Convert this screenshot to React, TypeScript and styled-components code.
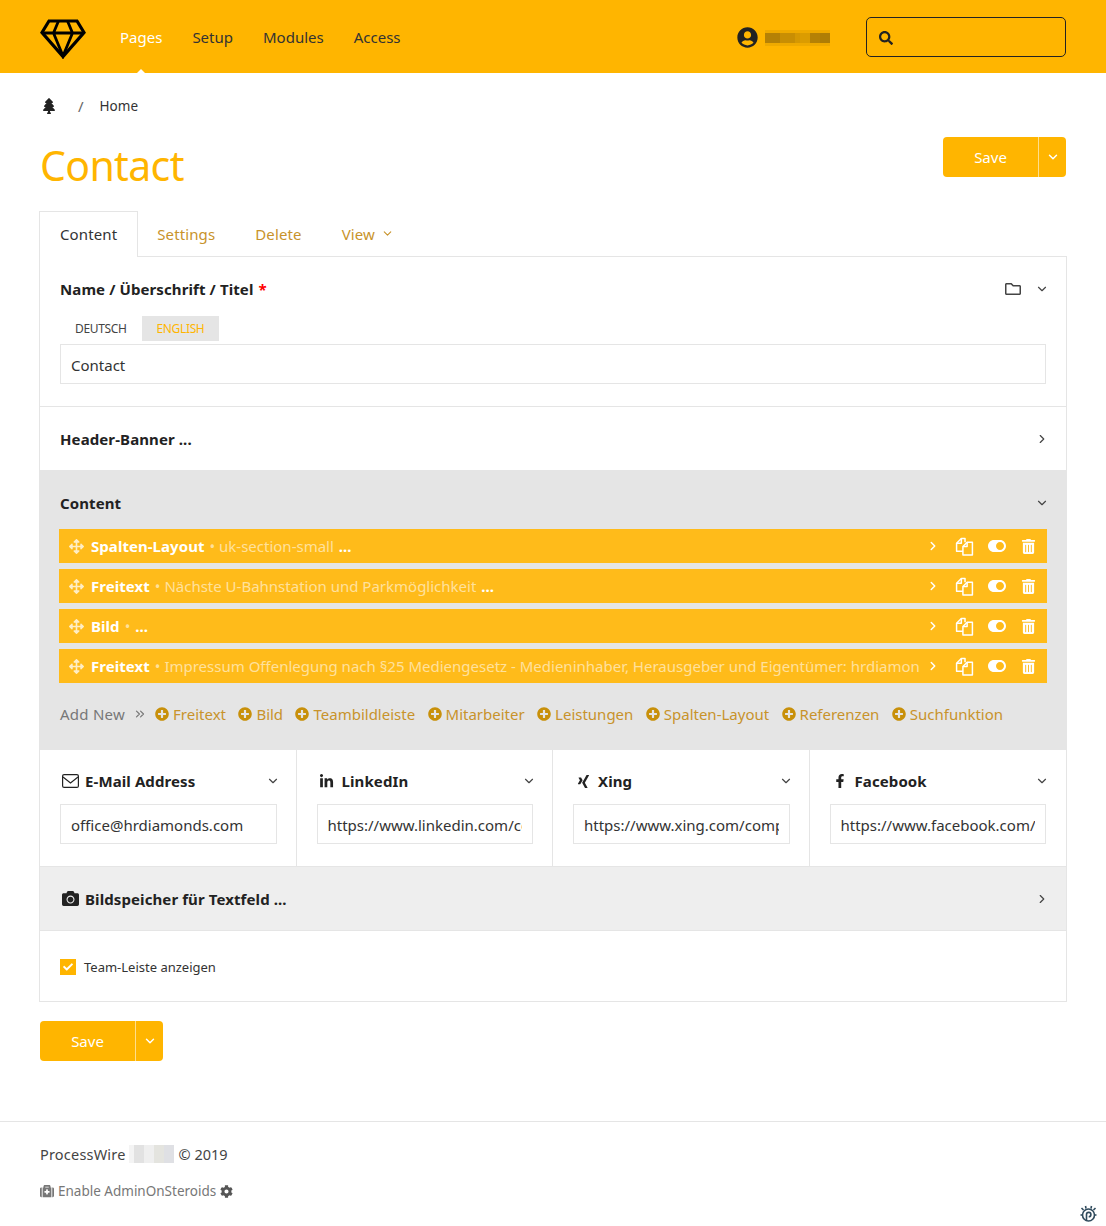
import React from "react";
import styled, { createGlobalStyle } from "styled-components";
import {
  FaTree, FaUserCircle, FaSearch, FaArrowsAlt, FaToggleOn, FaTrashAlt, FaPlusCircle, FaLinkedinIn, FaXing,
  FaFacebookF, FaCamera, FaRegFolder, FaMedkit, FaCog, FaCheck,
} from "react-icons/fa";
import { ChevronDown, ChevronRight, ChevronsRight } from "lucide-react";

const Y = "#FFB500";

const Global = createGlobalStyle`
  html, body { margin: 0; padding: 0; background: #fff; }
  body { font-family: "Noto Sans", "Open Sans", sans-serif; font-size: 15px; color: #333; line-height: 24px; }
  * { box-sizing: border-box; }
`;

const Page = styled.div`position: relative; width: 1106px; height: 1226px; overflow: hidden;`;
const Header = styled.header`height: 73px; background: ${Y}; display: flex; align-items: center; padding: 0 40px;`;
const Logo = styled.svg`width: 46px; height: 40px; flex: none; margin-top: 4px;`;
const Nav = styled.nav`display: flex; gap: 30px; margin-left: 34px; flex: 1;`;
const NavItem = styled.a<{ $active?: boolean }>`
  position: relative; font-size: 15px; line-height: 73px; padding-top: 2px; color: ${(p) => (p.$active ? "#fff" : "#333")};
  ${(p) => p.$active && `&::after { content: ""; position: absolute; left: 50%; bottom: 0; margin-left: -5px; border: 5px solid transparent; border-top: 0; border-bottom-color: #fff; }`}
`;
const User = styled.div`display: flex; align-items: center; gap: 7px; margin-right: 36px; margin-top: 2px; color: #222;`;
const Blur = styled.div`display: flex; width: 65px; height: 16px; background: rgba(120,90,0,.12);`;
const BlurCell = styled.span<{ $w: number; $a: number }>`height: 10px; margin-top: 3px; width: ${(p) => p.$w}px; background: rgba(110,80,10,${(p) => p.$a});`;
const Search = styled.div`width: 200px; height: 40px; border: 1px solid #222; border-radius: 5px; display: flex; align-items: center; padding: 2px 0 0 12px; color: #222;`;

const Main = styled.main`padding: 0 40px;`;
const Crumbs = styled.div`display: flex; align-items: center; height: 18px; margin-top: 24px; font-size: 13.5px; color: #333;`;
const CrumbIcon = styled.span`display: flex; margin-left: 1px; color: #222;`;
const Slash = styled.span`margin: 0 16px 0 21px; font-size: 15px; color: #666;`;
const TitleRow = styled.div`display: flex; justify-content: space-between; align-items: flex-start; margin-top: 22px; margin-bottom: 16px;`;
const H1 = styled.h1`margin: 0; font-size: 41px; line-height: 56px; font-weight: 400; color: ${Y}; letter-spacing: -.65px; height: 58px;`;
const SaveGroup = styled.div`display: flex; width: 123px; height: 40px; border-radius: 4px; overflow: hidden; background: ${Y}; color: #fff;`;
const SaveMain = styled.button`width: 96px; border: 0; background: none; color: inherit; font: inherit; padding: 0; border-right: 1px solid rgba(255,255,255,.55);`;
const SaveDrop = styled.span`flex: 1; display: flex; align-items: center; justify-content: center;`;

const Tabs = styled.div`display: flex; margin: 0 -1px; height: 46px; position: relative; z-index: 1; letter-spacing: .12px;`;
const Tab = styled.a<{ $active?: boolean }>`
  display: flex; align-items: center; gap: 6px; height: ${(p) => (p.$active ? 46 : 45)}px; padding: 0 20px;
  color: ${(p) => (p.$active ? "#333" : "#c8932b")};
  ${(p) => p.$active ? "background:#fff; border: 1px solid #e5e5e5; border-bottom: 0; margin-right: -1px; padding-bottom: 2px;" : ""}
`;
const Panel = styled.div`margin: -1px -1px 0; border: 1px solid #e5e5e5;`;
const Field = styled.section`padding: 20px 20px 22px; background: #fff; border-bottom: 1px solid #e5e5e5;`;
const Bar = styled.section<{ $bg?: string }>`
  height: 64px; display: flex; align-items: center; justify-content: space-between; padding: 0 20px;
  background: ${(p) => p.$bg || "#fff"}; border-bottom: 1px solid #e5e5e5;
`;
const FieldHead = styled.div`display: flex; align-items: center; justify-content: space-between; height: 24px;`;
const Label = styled.div`font-weight: 700; font-size: 15px; letter-spacing: .1px; color: #222; display: flex; align-items: center; gap: 5px;`;
const Req = styled.span`color: #f00; margin-left: 1px;`;
const HeadIcons = styled.div`display: flex; align-items: center; gap: 14px; color: #444; margin-right: -3px;`;
const Toggle = styled.span`display: flex; color: #444; margin-right: -3px;`;
const LangRow = styled.div`display: flex; margin-top: 15px; height: 25px;`;
const Lang = styled.span<{ $active?: boolean }>`
  padding: 0 15px; font-size: 12px; line-height: 25px; letter-spacing: -.35px;
  color: ${(p) => (p.$active ? Y : "#444")}; background: ${(p) => (p.$active ? "#e5e5e5" : "transparent")};
`;
const Input = styled.input`
  display: block; width: 100%; height: 40px; border: 1px solid #e5e5e5; padding: 2px 10px 0; margin-top: 3px;
  font: inherit; color: #333; outline: 0; background: #fff;
`;

const Content = styled.section`background: #e5e5e5; padding: 20px 19px 23px; border-bottom: 1px solid #e5e5e5;`;
const ContentHead = styled(FieldHead)`padding: 0 1px;`;
const Rows = styled.div`display: flex; flex-direction: column; gap: 6px; margin-top: 14px;`;
const Row = styled.div`height: 34px; background: #FFBB1A; color: #fff; display: flex; align-items: center; padding: 0 10px;`;
const RowText = styled.div`flex: 1; min-width: 0; display: flex; align-items: center; gap: 5px; white-space: nowrap; overflow: hidden; margin-left: 7px; margin-right: 6px;`;
const RowName = styled.b`font-weight: 700; letter-spacing: .05px;`;
const RowSub = styled.span`color: rgba(255,255,255,.58);`;
const RowTools = styled.div`display: flex; align-items: center; flex: none;`;
const ToolSlot = styled.span<{ $w: number; $ml?: number }>`
  width: ${(p) => p.$w}px; margin-left: ${(p) => p.$ml || 0}px; display: flex; align-items: center; justify-content: center;
`;
const AddBar = styled.div`display: flex; align-items: center; height: 24px; margin: 19px 0 0 1px;`;
const AddLabel = styled.span`color: #777; letter-spacing: .25px;`;
const AddArrow = styled.span`display: flex; margin: 0 8px 0 8px; color: #777;`;
const AddLink = styled.a`display: flex; align-items: center; gap: 4px; margin-right: 12.4px; color: #c8932b;`;
const AddIcon = styled.span`display: flex; color: #c8900a;`;

const Columns = styled.div`display: grid; grid-template-columns: repeat(4, 1fr); border-bottom: 1px solid #e5e5e5;`;
const Cell = styled.div`padding: 19px 19px 22px 20px; border-right: 1px solid #e5e5e5; &:last-child { border-right: 0; padding-right: 20px; }`;
const CellInput = styled(Input)`margin-top: 11px;`;
const LabelIcon = styled.span`display: flex; width: 20px; justify-content: center; color: #222;`;
const CheckRow = styled.div`height: 70px; display: flex; align-items: center; gap: 8px; padding: 2px 20px 0; font-size: 13px;`;
const Box = styled.span`width: 16px; height: 16px; background: ${Y}; color: #fff; display: flex; align-items: center; justify-content: center;`;
const BottomSave = styled.div`margin-top: 19px;`;

const Footer = styled.footer`margin-top: 60px; border-top: 1px solid #e5e5e5; padding: 20px 40px 0; color: #444;`;
const FootLine = styled.div`display: flex; align-items: center; height: 24px; font-size: 14.5px; gap: 3px;`;
const FootName = styled.span`letter-spacing: .2px;`;
const FootBlur = styled.div`display: flex; width: 45px; height: 18px; background: #eee; margin-right: 2px;`;
const FootCell = styled.span<{ $w: number; $c: string }>`width: ${(p) => p.$w}px; background: ${(p) => p.$c};`;
const Enable = styled.div`display: flex; align-items: center; gap: 4px; margin-top: 13px; height: 24px; font-size: 13.5px; color: #777;`;
const Bug = styled.svg`position: absolute; right: 9px; bottom: 3px; width: 17px; height: 18px;`;

const FilesIcon = () => (
  <svg width="19" height="19" viewBox="0 0 18 18" fill="none" stroke="#fff" strokeWidth="1.4" strokeLinejoin="round">
    <path d="M9.5 5V1.5H6L1.5 6v7.5h6" />
    <path d="M6 1.5V6H1.5" />
    <path d="M7.5 9l4-4h5v12h-9z" />
    <path d="M11.5 5v4h-4" />
  </svg>
);

const EnvelopeIcon = () => (
  <svg width="17" height="14" viewBox="0 0 17 14" fill="none" stroke="#222" strokeWidth="1.2">
    <rect x=".6" y=".6" width="15.8" height="12.8" rx="1.5" />
    <path d="M1 3l7.5 6L16 3" />
  </svg>
);

const SaveButton = () => (
  <SaveGroup>
    <SaveMain>Save</SaveMain>
    <SaveDrop><ChevronDown size={14} strokeWidth={2.5} /></SaveDrop>
  </SaveGroup>
);

const rows: [string, string, boolean][] = [
  ["Spalten-Layout", "uk-section-small", true],
  ["Freitext", "Nächste U-Bahnstation und Parkmöglichkeit", true],
  ["Bild", "", true],
  ["Freitext", "Impressum Offenlegung nach §25 Mediengesetz - Medieninhaber, Herausgeber und Eigentümer: hrdiamonds GmbH", false],
];
const adds = ["Freitext", "Bild", "Teambildleiste", "Mitarbeiter", "Leistungen", "Spalten-Layout", "Referenzen", "Suchfunktion"];
const cols: [React.ReactNode, string, string][] = [
  [<EnvelopeIcon />, "E-Mail Address", "office@hrdiamonds.com"],
  [<FaLinkedinIn size={15} />, "LinkedIn", "https://www.linkedin.com/company/hrdiamonds"],
  [<FaXing size={15} />, "Xing", "https://www.xing.com/companies/hrdiamonds"],
  [<FaFacebookF size={14} />, "Facebook", "https://www.facebook.com/hrdiamonds"],
];
const blur: [number, number][] = [[15, .45], [15, .3], [5, .2], [10, .15], [10, .45], [10, .5]];
const foot: [number, string][] = [[5, "#f4f4f4"], [10, "#e2e2e2"], [10, "#efefef"], [10, "#e4e4df"], [10, "#dfe0e4"]];

export default function App() {
  return (
    <Page>
      <Global />
      <Header>
        <Logo viewBox="0 0 46 40" fill="none" stroke="#000" strokeWidth="3.2" strokeLinejoin="miter">
          <path d="M9 2H37L44 13.5 23 37.5 2 13.5Z" />
          <path d="M2 14H44M18.5 2L13.5 14 23 37 32.5 14 27.5 2" strokeWidth="2.8" />
        </Logo>
        <Nav>
          <NavItem $active>Pages</NavItem>
          <NavItem>Setup</NavItem>
          <NavItem>Modules</NavItem>
          <NavItem>Access</NavItem>
        </Nav>
        <User>
          <FaUserCircle size={21} />
          <Blur>{blur.map(([w, a], i) => <BlurCell key={i} $w={w} $a={a} />)}</Blur>
        </User>
        <Search><FaSearch size={14} /></Search>
      </Header>
      <Main>
        <Crumbs>
          <CrumbIcon><FaTree size={16} /></CrumbIcon>
          <Slash>/</Slash>
          <span>Home</span>
        </Crumbs>
        <TitleRow>
          <H1>Contact</H1>
          <SaveButton />
        </TitleRow>
        <Tabs>
          <Tab $active>Content</Tab>
          <Tab>Settings</Tab>
          <Tab>Delete</Tab>
          <Tab>View <ChevronDown size={13} /></Tab>
        </Tabs>
        <Panel>
          <Field>
            <FieldHead>
              <Label><span>Name / Überschrift / Titel <Req>*</Req></span></Label>
              <HeadIcons><FaRegFolder size={16} /><ChevronDown size={14} /></HeadIcons>
            </FieldHead>
            <LangRow><Lang>DEUTSCH</Lang><Lang $active>ENGLISH</Lang></LangRow>
            <Input readOnly value="Contact" />
          </Field>
          <Bar>
            <Label>Header-Banner ...</Label>
            <Toggle><ChevronRight size={14} /></Toggle>
          </Bar>
          <Content>
            <ContentHead>
              <Label>Content</Label>
              <Toggle><ChevronDown size={14} /></Toggle>
            </ContentHead>
            <Rows>
              {rows.map(([name, sub, dots], i) => (
                <Row key={i}>
                  <FaArrowsAlt size={15} color="rgba(255,255,255,.75)" />
                  <RowText>
                    <RowName>{name}</RowName>
                    <RowSub>• {sub}</RowSub>
                    {dots && <RowName>...</RowName>}
                  </RowText>
                  <RowTools>
                    <ToolSlot $w={14}><ChevronRight size={14} strokeWidth={2.5} /></ToolSlot>
                    <ToolSlot $w={28} $ml={10}><FilesIcon /></ToolSlot>
                    <ToolSlot $w={18} $ml={10}><FaToggleOn size={22} /></ToolSlot>
                    <ToolSlot $w={17} $ml={14}><FaTrashAlt size={15} /></ToolSlot>
                  </RowTools>
                </Row>
              ))}
            </Rows>
            <AddBar>
              <AddLabel>Add New</AddLabel>
              <AddArrow><ChevronsRight size={14} /></AddArrow>
              {adds.map((a) => (
                <AddLink key={a}><AddIcon><FaPlusCircle size={14} /></AddIcon>{a}</AddLink>
              ))}
            </AddBar>
          </Content>
          <Columns>
            {cols.map(([icon, title, value]) => (
              <Cell key={title}>
                <FieldHead>
                  <Label><LabelIcon>{icon}</LabelIcon>{title}</Label>
                  <Toggle><ChevronDown size={14} /></Toggle>
                </FieldHead>
                <CellInput readOnly value={value} />
              </Cell>
            ))}
          </Columns>
          <Bar $bg="#eee">
            <Label><LabelIcon><FaCamera size={17} /></LabelIcon>Bildspeicher für Textfeld ...</Label>
            <Toggle><ChevronRight size={14} /></Toggle>
          </Bar>
          <CheckRow>
            <Box><FaCheck size={10} /></Box>
            Team-Leiste anzeigen
          </CheckRow>
        </Panel>
        <BottomSave><SaveButton /></BottomSave>
      </Main>
      <Footer>
        <FootLine>
          <FootName>ProcessWire</FootName>
          <FootBlur>{foot.map(([w, c], i) => <FootCell key={i} $w={w} $c={c} />)}</FootBlur>
          © 2019
        </FootLine>
        <Enable>
          <FaMedkit size={14} /> Enable AdminOnSteroids <FaCog size={13} color="#555" />
        </Enable>
      </Footer>
      <Bug viewBox="0 0 17 18" fill="none" stroke="#2f4a5c" strokeWidth="1.6">
        <circle cx="8.5" cy="10" r="6" />
        <path d="M6.5 16V9.5a2.2 2.2 0 1 1 2.2 2.3M3.5 5L1.5 3M13.5 5l2-2M6 3.5L5.5 1M11 3.5l.5-2.5M2.5 10H.5M14.5 10h2" />
      </Bug>
    </Page>
  );
}
